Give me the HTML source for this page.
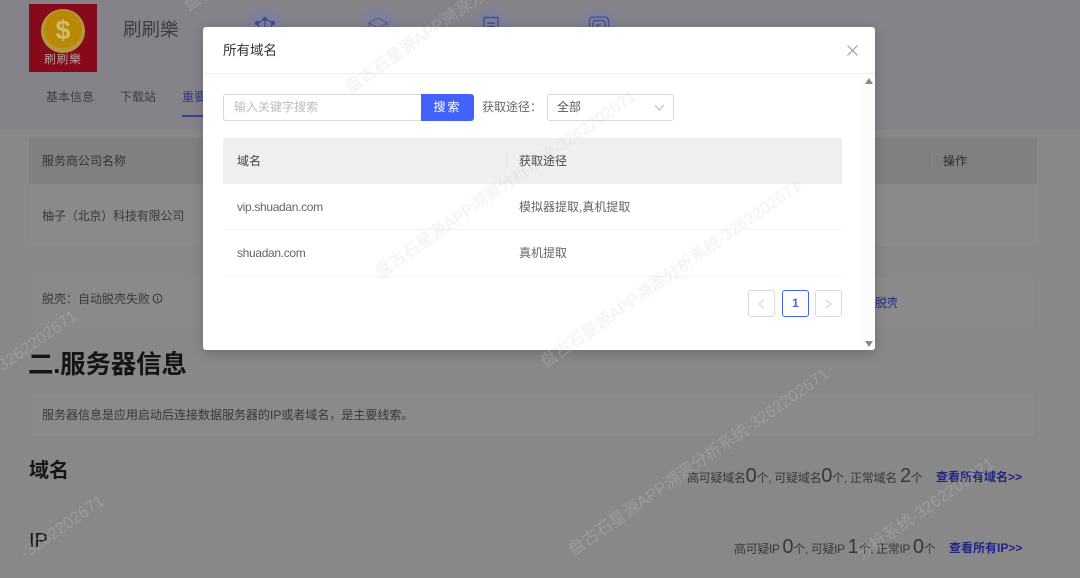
<!DOCTYPE html>
<html lang="zh">
<head>
<meta charset="utf-8">
<title>所有域名</title>
<style>
html,body{margin:0;padding:0;width:1080px;height:578px;overflow:hidden;background:#888}
body{font-family:"Liberation Sans","Noto Sans CJK SC",sans-serif;font-size:12px;color:#333}
#p{position:relative;width:1080px;height:578px;overflow:hidden;background:#888;filter:blur(.3px)}
.a{position:absolute;white-space:nowrap}
.t{position:absolute;white-space:nowrap;line-height:20px;height:20px}
.top{position:absolute;left:0;top:0;width:1080px;height:130px;background:#848389}
.circ{position:absolute;width:38px;height:38px;border-radius:50%;background:#7d8098;top:8px}
.card{position:absolute;background:#8a8a8a;border:1px solid #868686;box-sizing:border-box;border-radius:2px}
.modal{position:absolute;left:203px;top:27px;width:672px;height:323px;background:#fff;border-radius:3px;box-shadow:0 3px 12px rgba(0,0,0,.2);overflow:hidden}
.box{position:absolute;box-sizing:border-box;border:1px solid #d9d9d9;border-radius:3px;background:#fff}
.wms{position:absolute;left:0;top:0;z-index:5;pointer-events:none;overflow:hidden}
.wms text{font-family:"Liberation Sans","Noto Sans CJK SC",sans-serif;font-size:16.6px;fill:rgba(205,205,205,.28)}
.blue{color:#202585;font-weight:bold}
</style>
</head>
<body>
<div id="p">
<div class="top"></div>

<!-- logo -->
<svg class="a" style="left:29px;top:4px" width="68" height="68" viewBox="0 0 68 68">
  <rect width="68" height="68" fill="#860a1c"/>
  <circle cx="34" cy="27" r="22" fill="#b09a3c"/>
  <circle cx="34" cy="25.500" r="19" fill="#b98805"/>
  <text x="34" y="35" text-anchor="middle" font-family="Liberation Sans" font-weight="bold" font-size="27" fill="#cdbd6e">$</text>
  <text x="34" y="59" text-anchor="middle" font-family="Noto Sans CJK SC" font-size="11.500" fill="#bba6a6" letter-spacing="1">刷刷樂</text>
</svg>
<div class="t" style="left:123px;top:20px;font-size:18.500px;color:#3d3d40">刷刷樂</div>

<!-- top circle icons -->
<div class="circ" style="left:246px"></div>
<div class="circ" style="left:359px"></div>
<div class="circ" style="left:472px"></div>
<div class="circ" style="left:580px"></div>
<svg class="a" style="left:246px;top:8px" width="38" height="20" viewBox="0 0 38 20" fill="none" stroke="#464c92" stroke-width="1.300"><path d="M19 11l-8 4M19 11l8 4M19 11v9M11 15l3 5M27 15l-3 5"/><circle cx="19" cy="11" r="1.600" fill="#464c92"/><circle cx="11" cy="15" r="1.600" fill="#464c92"/><circle cx="27" cy="15" r="1.600" fill="#464c92"/></svg>
<svg class="a" style="left:359px;top:8px" width="38" height="20" viewBox="0 0 38 20" fill="none" stroke="#5a5f8e" stroke-width="1.200"><path d="M19 10l9 5v8M19 10l-9 5v8M10 15l9 5 9-5"/></svg>
<svg class="a" style="left:472px;top:8px" width="38" height="20" viewBox="0 0 38 20" fill="none" stroke="#464c92" stroke-width="1.400"><path d="M12 20V9.500h14V20M15 15h8M15 18.500h8"/></svg>
<svg class="a" style="left:580px;top:8px" width="38" height="20" viewBox="0 0 38 20" fill="none" stroke="#464c92" stroke-width="1.300"><path d="M9.500 20v-7q0-4 4-4h11q4 0 4 4v7M13 20v-5q0-2.500 2.500-2.500h7Q25 12.500 25 15v5M17 20v-3h4"/></svg>

<!-- tabs -->
<div class="t" style="left:46px;top:87px;color:#3e3e42">基本信息</div>
<div class="t" style="left:120px;top:87px;color:#3e3e42">下载站</div>
<div class="t" style="left:182px;top:87px;color:#2c3a96">重要</div>
<div class="a" style="left:182px;top:115px;width:22px;height:2px;background:#34449c"></div>

<!-- table under modal -->
<div class="a" style="left:29px;top:138px;width:1008px;height:46px;background:#808080"></div>
<div class="t" style="left:42px;top:151px;color:#333">服务商公司名称</div>
<div class="a" style="left:929px;top:152px;width:1px;height:16px;background:#777"></div>
<div class="t" style="left:943px;top:151px;color:#2b2b2b">操作</div>
<div class="a" style="left:29px;top:184px;width:1008px;height:64px;background:#8a8a8a;border-bottom:1px solid #868686;box-sizing:border-box"></div>
<div class="t" style="left:42px;top:206px;color:#383838;letter-spacing:-.15px">柚子（北京）科技有限公司</div>

<div class="card" style="left:30px;top:276px;width:1006px;height:53px"></div>
<div class="t" style="left:42px;top:289px;color:#3a3a3a">脱壳：自动脱壳失败</div>
<svg class="a" style="left:152px;top:293px" width="11" height="11" viewBox="0 0 11 11" fill="none" stroke="#333"><circle cx="5.500" cy="5.500" r="4.400"/><path d="M5.500 5v3M5.500 3v1"/></svg>
<div class="t" style="left:875px;top:293px;color:#23298f;width:22px;overflow:hidden">脱壳</div>

<div class="a" style="left:28px;top:347px;font-size:25.500px;font-weight:bold;line-height:36px;color:#151515;letter-spacing:-.2px">二.服务器信息</div>
<div class="card" style="left:30px;top:392px;width:1006px;height:46px"></div>
<div class="t" style="left:42px;top:405px;color:#383838">服务器信息是应用启动后连接数据服务器的IP或者域名，是主要线索。</div>

<div class="a" style="left:29px;top:457px;font-size:20px;font-weight:bold;line-height:28px;color:#161616">域名</div>
<div class="a" style="left:29px;top:527px;font-size:20px;line-height:28px;color:#161616">IP</div>

<div class="a" style="left:687px;top:462px;line-height:28px;color:#383838;letter-spacing:-.27px">高可疑域名<span style="font-size:20px">0</span>个, 可疑域名<span style="font-size:20px">0</span>个, 正常域名 <span style="font-size:20px">2</span>个</div>
<div class="a blue" style="left:936px;top:467px;line-height:20px">查看所有域名&gt;&gt;</div>
<div class="a" style="left:734px;top:533px;line-height:28px;color:#383838;letter-spacing:-.34px">高可疑IP <span style="font-size:20px">0</span>个, 可疑IP <span style="font-size:20px">1</span>个, 正常IP <span style="font-size:20px">0</span>个</div>
<div class="a blue" style="left:949px;top:538px;line-height:20px">查看所有IP&gt;&gt;</div>

<!-- modal -->
<div class="modal">
  <div class="t" style="left:20px;top:14px;font-size:13.500px;color:#333">所有域名</div>
  <svg class="a" style="left:644px;top:18px" width="11" height="11" viewBox="0 0 11 11" fill="none" stroke="#999" stroke-width="1.100"><path d="M.5.5l10 10M10.500.5l-10 10"/></svg>
  <div class="a" style="left:0;top:46px;width:672px;height:1px;background:#eee"></div>

  <div class="a" style="left:659px;top:47px;width:13px;height:276px;background:#fcfcfc"></div>
  <div class="a" style="left:662px;top:51px;width:0;height:0;border-left:4px solid transparent;border-right:4px solid transparent;border-bottom:6px solid #8a8a8a"></div>
  <div class="a" style="left:662px;top:314px;width:0;height:0;border-left:4px solid transparent;border-right:4px solid transparent;border-top:6px solid #8a8a8a"></div>

  <div class="box" style="left:20px;top:67px;width:200px;height:27px;border-radius:3px 0 0 3px"></div>
  <div class="t" style="left:31px;top:70px;color:#bdbdbd">输入关键字搜索</div>
  <div class="a" style="left:218px;top:67px;width:53px;height:27px;background:#4262fb;border-radius:0 3px 3px 0;color:#fff;text-align:center;line-height:27px;letter-spacing:2px">搜索</div>
  <div class="t" style="left:279px;top:70px;color:#666">获取途径：</div>
  <div class="box" style="left:344px;top:67px;width:127px;height:27px"></div>
  <div class="t" style="left:354px;top:70px;color:#555">全部</div>
  <svg class="a" style="left:451px;top:77px" width="11" height="7" viewBox="0 0 11 7" fill="none" stroke="#bbb"><path d="M1 1l4.500 5L10 1"/></svg>

  <div class="a" style="left:20px;top:111px;width:619px;height:46px;background:#efefef"></div>
  <div class="t" style="left:34px;top:124px;color:#444">域名</div>
  <div class="a" style="left:303px;top:125px;width:1px;height:16px;background:#e3e3e3"></div>
  <div class="t" style="left:316px;top:124px;color:#444">获取途径</div>

  <div class="t" style="left:34px;top:170px;color:#666;letter-spacing:-.33px">vip.shuadan.com</div>
  <div class="t" style="left:316px;top:170px;color:#666">模拟器提取,真机提取</div>
  <div class="a" style="left:20px;top:202px;width:619px;height:1px;background:#f3f3f3"></div>
  <div class="t" style="left:34px;top:216px;color:#666;letter-spacing:-.33px">shuadan.com</div>
  <div class="t" style="left:316px;top:216px;color:#666">真机提取</div>
  <div class="a" style="left:20px;top:249px;width:619px;height:1px;background:#f3f3f3"></div>

  <div class="box" style="left:545px;top:263px;width:27px;height:27px"></div>
  <svg class="a" style="left:555px;top:272px" width="7" height="10" viewBox="0 0 7 10" fill="none" stroke="#ccc"><path d="M6 1L1 5l5 4"/></svg>
  <div class="box" style="left:579px;top:263px;width:27px;height:27px;border-color:#4262fb;color:#4262fb;text-align:center;line-height:25px;font-weight:bold">1</div>
  <div class="box" style="left:612px;top:263px;width:27px;height:27px"></div>
  <svg class="a" style="left:622px;top:272px" width="7" height="10" viewBox="0 0 7 10" fill="none" stroke="#ccc"><path d="M1 1l5 4-5 4"/></svg>
</div>

<!-- watermarks -->
<svg class="wms" width="1080" height="578" viewBox="0 0 1080 578">
  <text transform="translate(353 97) rotate(-35)" y="-4.500">盘古石星源APP溯源分析系统-3262202671</text>
  <text transform="translate(383 282) rotate(-35)" y="-4.500">盘古石星源APP溯源分析系统-3262202671</text>
  <text transform="translate(548 372) rotate(-35)" y="-4.500">盘古石星源APP溯源分析系统-3262202671</text>
  <text transform="translate(576 560) rotate(-35)" y="-4.500">盘古石星源APP溯源分析系统-3262202671</text>
  <text transform="translate(998 470) rotate(-35)" y="-4.500" text-anchor="end">分析系统-3262202671</text>
  <text transform="translate(191 15) rotate(-35)" y="-4.500">盘古石星源APP溯源分析系统-3262202671</text>
  <text transform="translate(-176 502) rotate(-35)" y="-4.500">盘古石星源APP溯源分析系统-3262202671</text>
  <text transform="translate(108 507) rotate(-35)" y="-4.500" text-anchor="end">-3262202671</text>
</svg>
</div>
</body>
</html>
